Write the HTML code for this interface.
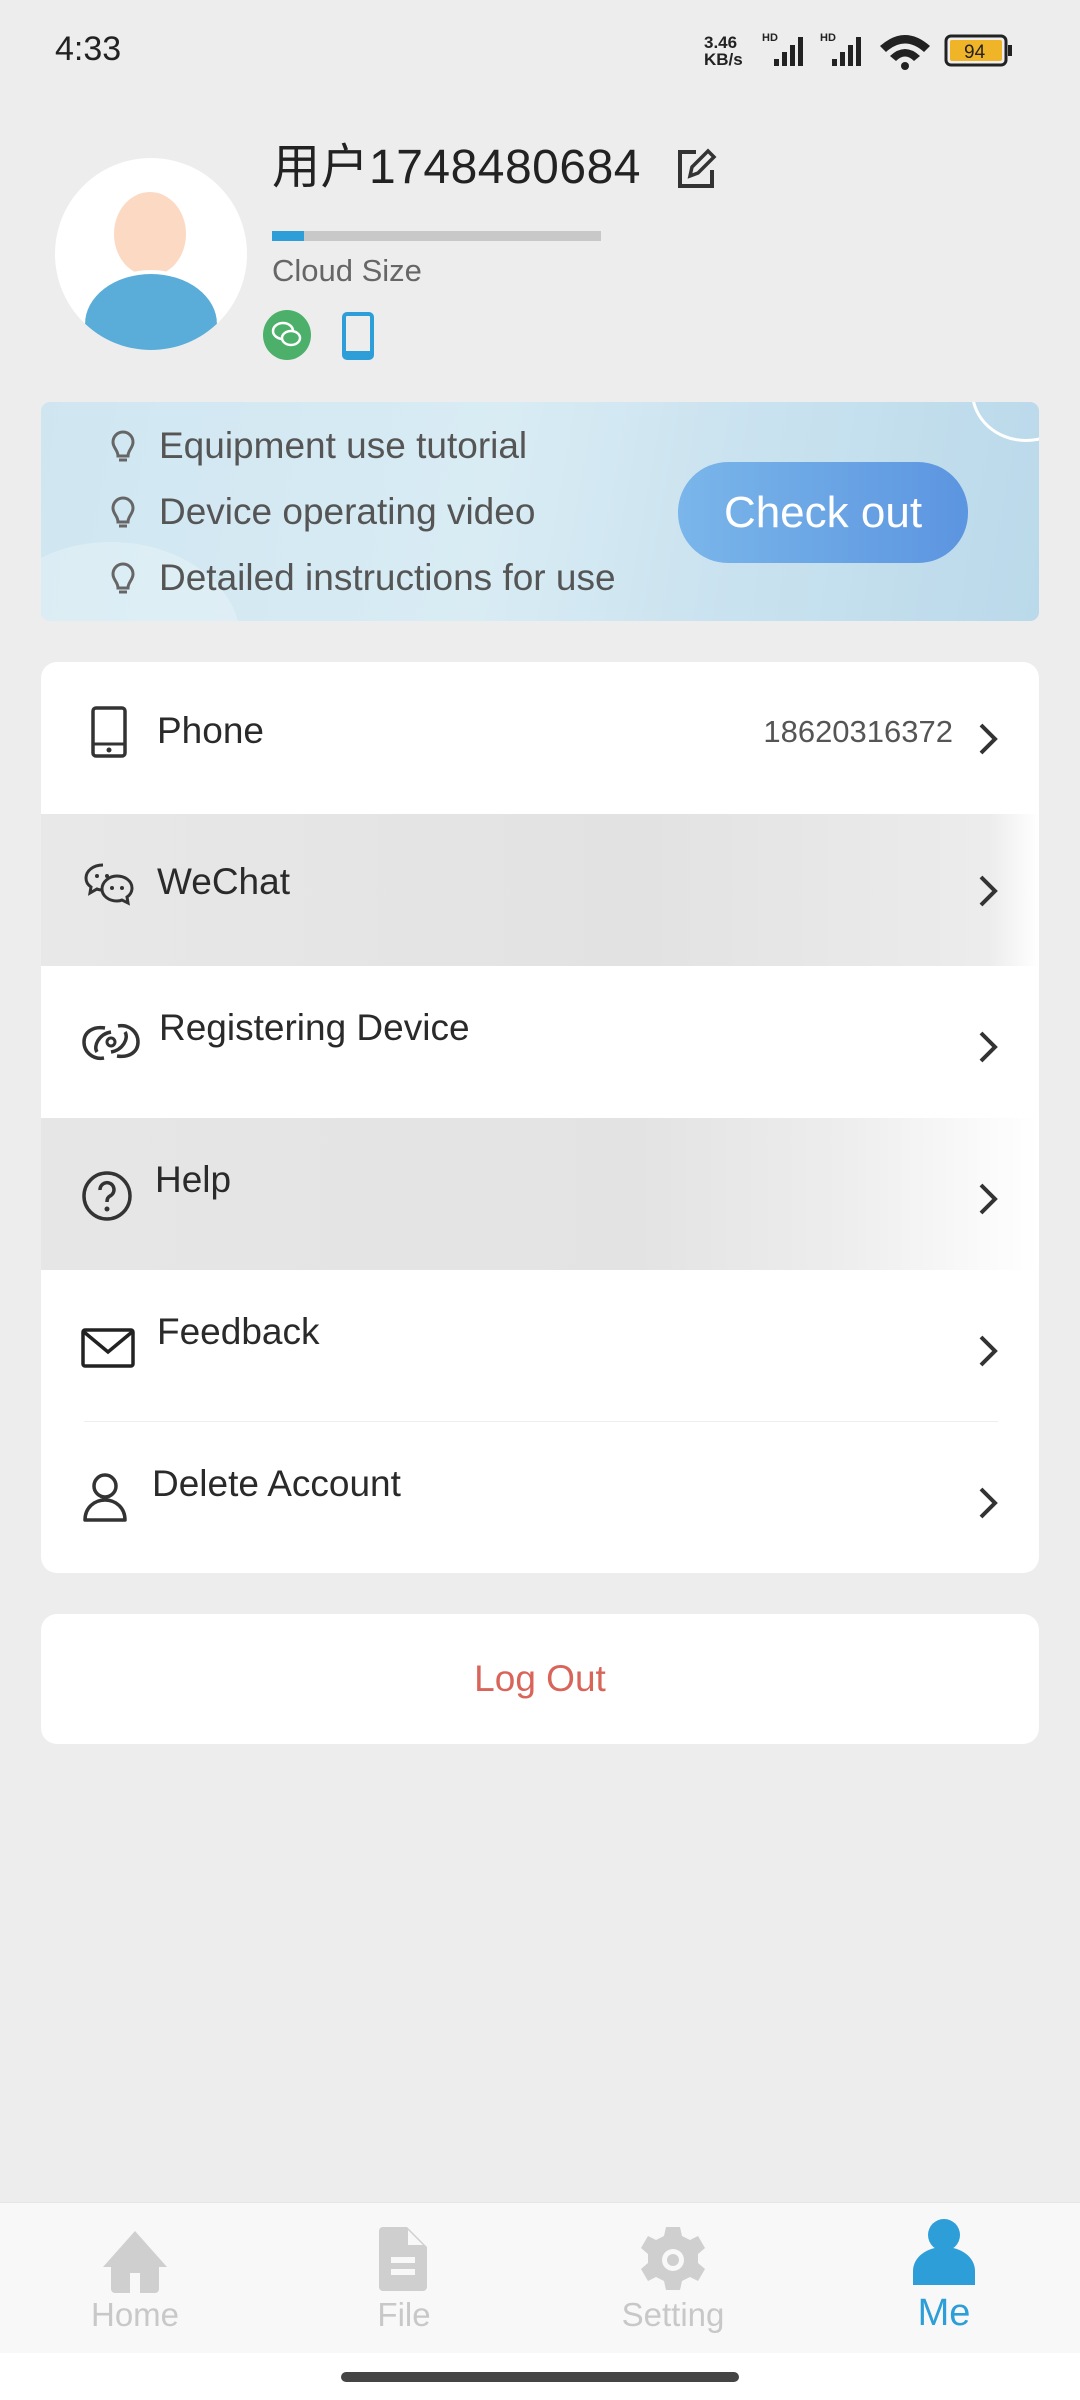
<!DOCTYPE html>
<html><head><meta charset="utf-8"><style>
*{margin:0;padding:0;box-sizing:border-box}
body{width:1080px;height:2400px;background:#ededed;position:relative;font-family:"Liberation Sans","Noto Sans CJK SC",sans-serif;overflow:hidden;color:#222}
.a{position:absolute}
.row{position:absolute;left:0;width:998px;height:152px}
.lbl{position:absolute;left:115px;top:46px;font-size:37px;color:#2a2a2a;line-height:44px}
.chev{position:absolute;right:40px;top:60px}
.ic{position:absolute;left:38px;top:50px}
.nav{position:absolute;top:0;width:200px;text-align:center}
.nav span{position:absolute;top:93px;left:0;width:200px;font-size:33px;color:#c8c8c8}
</style></head><body>
<div class="a" style="left:55px;top:30px;font-size:34px;color:#222">4:33</div>
<div class="a" style="left:704px;top:34px;font-size:17px;font-weight:bold;line-height:17px;color:#222">3.46<br>KB/s</div>
<svg class="a" style="left:750px;top:30px" width="270" height="42" viewBox="0 0 270 42">
<g fill="#222"><text x="12" y="11" font-size="11" font-weight="bold" font-family="Liberation Sans">HD</text>
<rect x="24" y="29" width="5" height="7"/><rect x="32" y="22" width="5" height="14"/><rect x="40" y="15" width="5" height="21"/><rect x="48" y="7" width="5" height="29"/>
<text x="70" y="11" font-size="11" font-weight="bold" font-family="Liberation Sans">HD</text>
<rect x="82" y="29" width="5" height="7"/><rect x="90" y="22" width="5" height="14"/><rect x="98" y="15" width="5" height="21"/><rect x="106" y="7" width="5" height="29"/>
<path d="M130 16 Q155 -6 180 16 L174 22 Q155 5 136 22Z"/><path d="M140 26 Q155 12 170 26 L164 31 Q155 22 146 31Z"/><circle cx="155" cy="36" r="4"/></g>
<rect x="196" y="6" width="60" height="29" rx="5" fill="none" stroke="#222" stroke-width="3"/><rect x="200" y="10" width="52" height="21" rx="2" fill="#f0b429"/>
<rect x="258" y="15" width="4" height="11" fill="#222"/>
<text x="214" y="28" font-size="19" font-family="Liberation Sans" fill="#222">94</text></svg>

<div class="a" style="left:55px;top:158px;width:192px;height:192px;border-radius:50%;background:#fff;overflow:hidden">
<div class="a" style="left:59px;top:34px;width:72px;height:84px;border-radius:50%;background:#fcd9c3"></div>
<div class="a" style="left:30px;top:112px;width:132px;height:120px;border-radius:50% 50% 50% 50%/45% 45% 55% 55%;background:#5aadd8;border-top:4px solid #fff"></div>
</div>
<div class="a" style="left:272px;top:140px;font-size:48px;color:#222;line-height:56px;letter-spacing:0.5px">用户1748480684</div>
<svg class="a" style="left:674px;top:146px" width="44" height="46" viewBox="0 0 44 46"><path d="M22 6H6v34h32V24" fill="none" stroke="#333" stroke-width="4"/><path d="M16 30l2-9L34 5l6 6-16 16z" fill="none" stroke="#333" stroke-width="3.5"/></svg>
<div class="a" style="left:272px;top:231px;width:329px;height:10px;background:#c8c8c8"></div>
<div class="a" style="left:272px;top:231px;width:32px;height:10px;background:#2e9ed8"></div>
<div class="a" style="left:272px;top:253px;font-size:31px;color:#666">Cloud Size</div>
<div class="a" style="left:263px;top:310px;width:48px;height:50px;border-radius:50%;background:#4cb06b"></div>
<svg class="a" style="left:268px;top:318px" width="38" height="34" viewBox="0 0 38 34"><ellipse cx="15" cy="13" rx="10" ry="8" fill="none" stroke="#fff" stroke-width="2.5"/><ellipse cx="23" cy="20" rx="9" ry="7" fill="#4cb06b" stroke="#fff" stroke-width="2.5"/></svg>
<div class="a" style="left:342px;top:312px;width:32px;height:48px;border:4px solid #2e9ed8;border-radius:5px;border-bottom-width:9px"></div>

<div class="a" style="left:41px;top:402px;width:998px;height:219px;border-radius:9px;background:linear-gradient(100deg,#cfe6f1 0%,#d9ecf4 45%,#c9e2ef 70%,#bad9ea 100%);overflow:hidden">
<div class="a" style="left:-60px;top:140px;width:260px;height:200px;border-radius:50%;background:rgba(255,255,255,.25)"></div>
<div class="a" style="left:930px;top:-60px;width:110px;height:100px;border-radius:50%;border:3px solid #fff"></div>
<svg class="a" style="left:62px;top:12px" width="40" height="190" viewBox="0 0 40 190"><g fill="none" stroke="#666" stroke-width="3"><path d="M10 28a10 10 0 1 1 20 0c0 6-5 8-5 14H15c0-6-5-8-5-14z M16 46h8"/><path d="M10 94a10 10 0 1 1 20 0c0 6-5 8-5 14H15c0-6-5-8-5-14z M16 112h8"/><path d="M10 160a10 10 0 1 1 20 0c0 6-5 8-5 14H15c0-6-5-8-5-14z M16 178h8"/></g></svg>
<div class="a" style="left:118px;top:22px;font-size:37px;color:#555;line-height:44px">Equipment use tutorial</div>
<div class="a" style="left:118px;top:88px;font-size:37px;color:#555;line-height:44px">Device operating video</div>
<div class="a" style="left:118px;top:154px;font-size:37px;color:#555;line-height:44px">Detailed instructions for use</div>
<div class="a" style="left:637px;top:60px;width:290px;height:101px;border-radius:50px;background:linear-gradient(90deg,#7ab6ea,#5c95e0);color:#fff;font-size:44px;text-align:center;line-height:101px">Check out</div>
</div>

<div class="a" style="left:41px;top:662px;width:998px;height:911px;background:#fff;border-radius:16px;overflow:hidden">
<div class="row" style="top:0"><svg class="ic" width="40" height="52" viewBox="0 0 40 52" style="left:48px;top:44px"><rect x="4" y="2" width="32" height="48" rx="3" fill="none" stroke="#333" stroke-width="3.5"/><path d="M4 38h32" stroke="#333" stroke-width="3"/><circle cx="20" cy="44" r="2.5" fill="#333"/></svg>
<div class="lbl" style="left:116px;top:47px">Phone</div>
<div class="a" style="left:712px;top:52px;font-size:31px;color:#555;width:200px;text-align:right">18620316372</div>
<svg class="chev" width="22" height="34" viewBox="0 0 22 34"><path d="M4 3l14 14L4 31" fill="none" stroke="#333" stroke-width="4"/></svg></div>
<div class="row" style="top:152px;background:linear-gradient(90deg,#e8e8e8,#e2e2e2 60%,#ececec 95%,#fff)"><svg class="ic" width="52" height="44" viewBox="0 0 52 44" style="left:42px;top:48px"><g fill="none" stroke="#333" stroke-width="3"><path d="M20 3C10 3 3 9 3 16c0 4 2 7 5 9l-1 6 7-4c2 1 4 1 6 1"/><path d="M34 14c8 0 15 5 15 12 0 4-2 7-5 9l1 6-6-3c-2 1-4 1-5 1-8 0-15-5-15-12s7-13 15-13z"/></g><circle cx="14" cy="14" r="2" fill="#333"/><circle cx="24" cy="14" r="2" fill="#333"/><circle cx="29" cy="26" r="2" fill="#333"/><circle cx="39" cy="26" r="2" fill="#333"/></svg>
<div class="lbl" style="left:116px">WeChat</div>
<svg class="chev" width="22" height="34" viewBox="0 0 22 34"><path d="M4 3l14 14L4 31" fill="none" stroke="#333" stroke-width="4"/></svg></div>
<div class="row" style="top:304px"><svg class="ic" width="60" height="44" viewBox="0 0 60 44" style="left:40px;top:54px"><g fill="none" stroke="#333" stroke-width="3.5"><path d="M24 8C12 6 3 12 3 22s9 18 20 16"/><path d="M36 36c12 2 21-4 21-14S48 4 37 6"/><path d="M16 32c-4-6 2-18 14-20"/><path d="M44 12c4 6-2 18-14 20"/></g><circle cx="30" cy="22" r="4" fill="none" stroke="#333" stroke-width="3"/></svg>
<div class="lbl" style="left:118px;top:40px">Registering Device</div>
<svg class="chev" width="22" height="34" viewBox="0 0 22 34" style="top:64px"><path d="M4 3l14 14L4 31" fill="none" stroke="#333" stroke-width="4"/></svg></div>
<div class="row" style="top:456px;background:linear-gradient(90deg,#e6e6e6,#e3e3e3 60%,#ededed 80%,#fff)"><svg class="ic" width="52" height="52" viewBox="0 0 52 52" style="left:40px;top:52px"><circle cx="26" cy="26" r="23" fill="none" stroke="#333" stroke-width="3.5"/><path d="M19 20a7 7 0 1 1 10 6c-2 1-3 3-3 6" fill="none" stroke="#333" stroke-width="3.5"/><circle cx="26" cy="39" r="2.5" fill="#333"/></svg>
<div class="lbl" style="left:114px;top:40px">Help</div>
<svg class="chev" width="22" height="34" viewBox="0 0 22 34" style="top:64px"><path d="M4 3l14 14L4 31" fill="none" stroke="#333" stroke-width="4"/></svg></div>
<div class="a" style="top:759px;left:43px;width:914px;height:1px;background:#eee"></div>
<div class="row" style="top:608px;height:151px"><svg class="ic" width="54" height="40" viewBox="0 0 54 40" style="left:40px;top:58px"><rect x="2" y="2" width="50" height="36" rx="2" fill="none" stroke="#222" stroke-width="3.5"/><path d="M3 4l24 20L51 4" fill="none" stroke="#222" stroke-width="3.5"/></svg>
<div class="lbl" style="left:116px;top:40px">Feedback</div>
<svg class="chev" width="22" height="34" viewBox="0 0 22 34" style="top:64px"><path d="M4 3l14 14L4 31" fill="none" stroke="#333" stroke-width="4"/></svg></div>
<div class="row" style="top:760px"><svg class="ic" width="48" height="52" viewBox="0 0 48 52" style="left:40px;top:50px"><circle cx="24" cy="14" r="11" fill="none" stroke="#333" stroke-width="3.5"/><path d="M4 48c0-12 9-20 20-20s20 8 20 20z" fill="none" stroke="#333" stroke-width="3.5" stroke-linejoin="round"/></svg>
<div class="lbl" style="left:111px;top:40px">Delete Account</div>
<svg class="chev" width="22" height="34" viewBox="0 0 22 34" style="top:64px"><path d="M4 3l14 14L4 31" fill="none" stroke="#333" stroke-width="4"/></svg></div>
</div>

<div class="a" style="left:41px;top:1614px;width:998px;height:130px;background:#fff;border-radius:16px;text-align:center;line-height:130px;font-size:37px;color:#d8645a">Log Out</div>

<div class="a" style="left:0;top:2202px;width:1080px;height:151px;background:#f8f8f8;border-top:1px solid #e6e6e6">
<div class="nav" style="left:35px"><svg width="70" height="70" viewBox="0 0 70 70" style="margin-top:22px"><path d="M35 6L67 42h-8v22a4 4 0 0 1-4 4H15a4 4 0 0 1-4-4V42H3z" fill="#cfcfcf"/><rect x="30" y="48" width="10" height="20" fill="#f8f8f8"/></svg><span>Home</span></div>
<div class="nav" style="left:304px"><svg width="50" height="64" viewBox="0 0 50 64" style="margin-top:24px"><path d="M4 0h24l20 20v40a4 4 0 0 1-4 4H4a4 4 0 0 1-4-4V4a4 4 0 0 1 4-4z" fill="#cfcfcf"/><path d="M29 3v15h15z" fill="#f8f8f8"/><rect x="12" y="30" width="24" height="6" fill="#f8f8f8"/><rect x="12" y="42" width="24" height="6" fill="#f8f8f8"/></svg><span>File</span></div>
<div class="nav" style="left:573px"><svg width="70" height="70" viewBox="0 0 70 70" style="margin-top:22px"><path d="M28 2h14l2 9 8 4 8-4 7 12-7 6v9l7 6-7 12-8-4-8 4-2 9H28l-2-9-8-4-8 4-7-12 7-6v-9l-7-6 7-12 8 4 8-4z" fill="#cfcfcf"/><circle cx="35" cy="35" r="11" fill="#f8f8f8"/><circle cx="35" cy="35" r="6" fill="#cfcfcf"/></svg><span>Setting</span></div>
<div class="nav" style="left:844px"><svg width="66" height="70" viewBox="0 0 66 70" style="margin-top:16px"><ellipse cx="33" cy="16" rx="16" ry="16" fill="#2e9ed8"/><path d="M2 66V52c0-14 14-24 31-24s31 10 31 24v14z" fill="#2e9ed8"/></svg><span style="color:#2e9ed8;font-size:38px;top:89px">Me</span></div>
</div>
<div class="a" style="left:0;top:2353px;width:1080px;height:47px;background:#fff"></div>
<div class="a" style="left:341px;top:2372px;width:398px;height:10px;border-radius:5px;background:#444"></div>
</body></html>
